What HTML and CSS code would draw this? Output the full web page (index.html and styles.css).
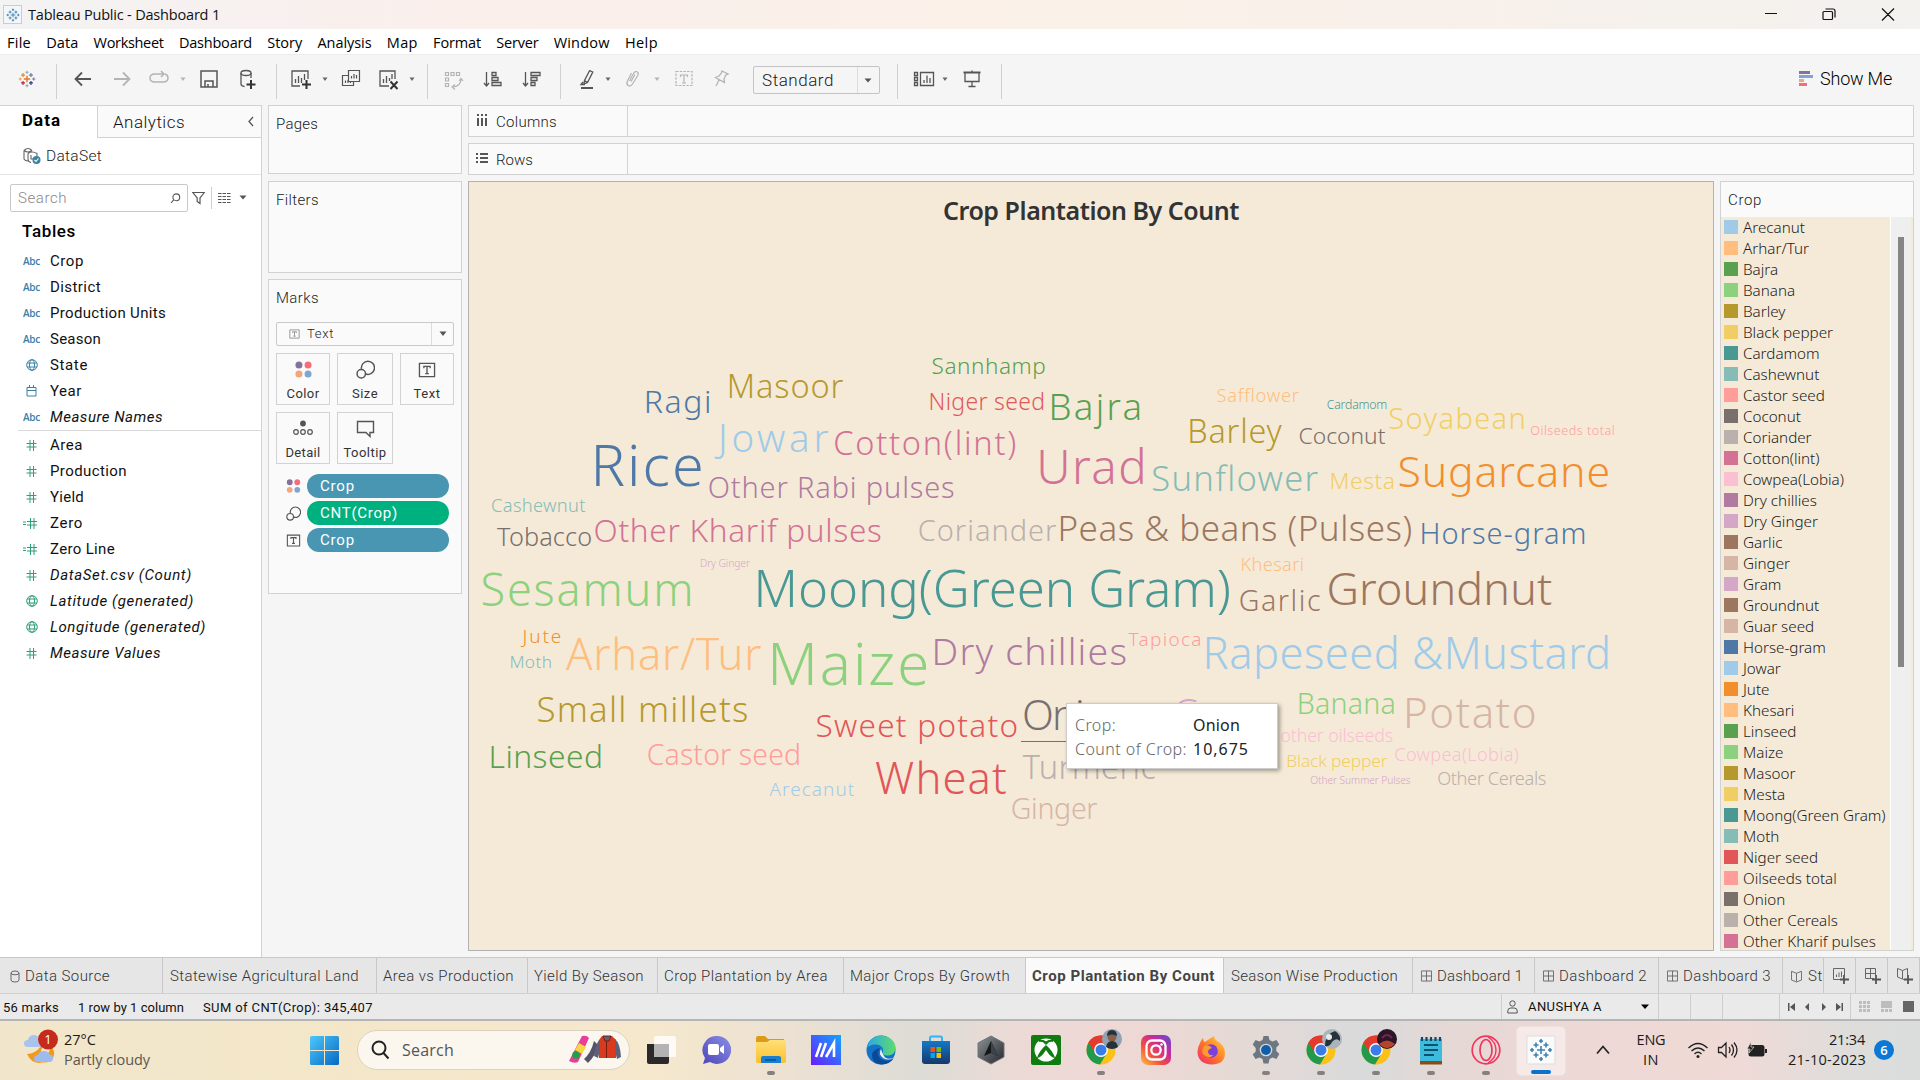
FILE: index.html
```html
<!DOCTYPE html>
<html lang="en">
<head>
<meta charset="utf-8">
<title>Tableau Public - Dashboard 1</title>
<link rel="stylesheet" href="styles.css">
</head>
<body>
<svg class="defs" aria-hidden="true">
  <defs>
    <linearGradient id="gWin" x1="0" y1="0" x2="1" y2="1"><stop offset="0" stop-color="#4cc8fb"/><stop offset="1" stop-color="#0669c4"/></linearGradient>
    <linearGradient id="gM" x1="0" y1="1" x2="1" y2="0"><stop offset="0" stop-color="#6a1cff"/><stop offset="1" stop-color="#12a5ff"/></linearGradient>
    <linearGradient id="gChat" x1="1" y1="0" x2="0" y2="1"><stop offset="0" stop-color="#8a8fe8"/><stop offset="1" stop-color="#4f46b8"/></linearGradient>
    <linearGradient id="gFold" x1="0" y1="0" x2="0" y2="1"><stop offset="0" stop-color="#ffe07a"/><stop offset="1" stop-color="#fbbf2b"/></linearGradient>
    <linearGradient id="gEdge" x1="0" y1="0" x2="1" y2="0"><stop offset="0" stop-color="#2aa7e8"/><stop offset="1" stop-color="#5fdc6a"/></linearGradient>
    <linearGradient id="gStore" x1="0" y1="0" x2="0" y2="1"><stop offset="0" stop-color="#1478c8"/><stop offset="1" stop-color="#16386a"/></linearGradient>
    <linearGradient id="gInsta" x1="0" y1="1" x2="1" y2="0"><stop offset="0" stop-color="#fdc447"/><stop offset=".35" stop-color="#f4503c"/><stop offset=".65" stop-color="#c92a9a"/><stop offset="1" stop-color="#5a4fd8"/></linearGradient>
    <linearGradient id="gFox" x1="1" y1="0" x2="0" y2="1"><stop offset="0" stop-color="#ffdc3c"/><stop offset=".5" stop-color="#ff7a2a"/><stop offset="1" stop-color="#f0246a"/></linearGradient>
    <linearGradient id="gHex" x1="0" y1="0" x2="1" y2="1"><stop offset="0" stop-color="#8d9499"/><stop offset="1" stop-color="#23262a"/></linearGradient>
    <symbol id="tlogo" viewBox="0 0 24 24">
      <g fill="none" stroke-width="1.5">
        <path d="M12 8v8M8 12h8" stroke="#e8762c" stroke-width="1.9"/>
        <path d="M7 4.500v5M4.500 7h5" stroke="#e8862c"/><path d="M17 14.500v5M14.500 17h5" stroke="#1f447e"/>
        <path d="M17 4.500v5M14.500 7h5" stroke="#59879b"/><path d="M7 14.500v5M4.500 17h5" stroke="#c72037"/>
        <path d="M12 1.500v4M10 3.500h4" stroke="#7099a6" stroke-width="1"/><path d="M12 18.500v4M10 20.500h4" stroke="#7099a6" stroke-width="1"/>
        <path d="M3.500 10v4M1.500 12h4" stroke="#eb912c" stroke-width="1"/><path d="M20.500 10v4M18.500 12h4" stroke="#5b6591" stroke-width="1"/>
      </g>
    </symbol>
    <symbol id="tlogo-blue" viewBox="0 0 24 24">
      <path fill="none" stroke="#3f83ae" stroke-width="1.600" d="M12 8v8M8 12h8M7 4.500v5M4.500 7h5M17 14.500v5M14.500 17h5M17 4.500v5M14.500 7h5M7 14.500v5M4.500 17h5M12 1v4M10 3h4M12 19v4M10 21h4M3 10v4M1 12h4M21 10v4M19 12h4"/>
    </symbol>
    <symbol id="caret" viewBox="0 0 10 24"><path d="M2.500 10.500h5L5 14z" fill="currentColor"/></symbol>
    <symbol id="ticon" viewBox="0 0 20 18"><path fill="none" stroke="currentColor" stroke-width="1.500" d="M1.500 1.500h17v15h-17zM6.500 7V5h7v2M10 5v8M8 13h4"/></symbol>
    <symbol id="dots" viewBox="0 0 16 16"><circle cx="3.700" cy="3.700" r="3.300" fill="#86719a"/><circle cx="12.300" cy="3.700" r="3.300" fill="#f46d7f"/><circle cx="3.700" cy="12.300" r="3.300" fill="#f1a67c"/><circle cx="12.300" cy="12.300" r="3.300" fill="#7fa6cf"/></symbol>
    <symbol id="size" viewBox="0 0 18 18"><g fill="none" stroke="#555" stroke-width="1.400"><path d="M5.200 8.500A6.200 6.200 0 1 1 9.300 13.300"/><circle cx="5" cy="13" r="4"/></g></symbol>
    <symbol id="grid" viewBox="0 0 12 12"><path fill="none" stroke="#666" d="M.5.5h11v11H.5zM.5 6h11M6 .5v11"/></symbol>
    <symbol id="book" viewBox="0 0 12 13"><path fill="none" stroke="#666" d="M6 3 .5.800v9.500L6 12.500l5.500-2.200V.800L6 3zM6 3v9"/></symbol>
    <symbol id="globe" viewBox="0 0 12 12"><g fill="none" stroke="currentColor"><circle cx="6" cy="6" r="5.300"/><ellipse cx="6" cy="6" rx="2.500" ry="5.300"/><path d="M1.200 4h9.600M1.200 8h9.600"/></g></symbol>
    <symbol id="chrome" viewBox="0 0 30 30"><circle cx="15" cy="15" r="14.500" fill="#fbc116"/><path d="M15 15 2.400 7.800A14.500 14.500 0 0 1 27.600 7.800z" fill="#e33b2e"/><path d="M15 15 2.400 7.800A14.500 14.500 0 0 0 14 29.500l6.600-11z" fill="#229a4c"/><path d="M15 8h12.700A14.500 14.500 0 0 0 2.400 7.800L9 18z" fill="#e33b2e"/><circle cx="15" cy="15" r="6.900" fill="#fff"/><circle cx="15" cy="15" r="5.500" fill="#3a7de8"/></symbol>
  </defs>
</svg>

<div class="titlebar">
  <div class="app-badge"><svg width="14" height="14"><use href="#tlogo-blue"/></svg></div>
  <span class="win-title" data-w="191">Tableau Public - Dashboard 1</span>
  <svg class="win-btns" width="140" height="29" fill="none" stroke="#111" stroke-width="1.200">
    <path d="M5 13.500h12M64 11.500h7.500q1 0 1 1V18.500q0 1-1 1H64q-1 0-1-1v-6q0-1 1-1zM65.500 9h7.500q2 0 2 2v6.500M122 8.500l12 12M134 8.500l-12 12"/>
  </svg>
</div>
<nav class="menubar">
  <span data-w="23">File</span><span data-w="31">Data</span><span data-w="69">Worksheet</span><span data-w="72">Dashboard</span><span data-w="34">Story</span><span data-w="53">Analysis</span><span data-w="30">Map</span><span data-w="47">Format</span><span data-w="41">Server</span><span data-w="55">Window</span><span data-w="32">Help</span>
</nav>

<div class="toolbar">
  <svg class="ic m15"><use href="#tlogo" x="2.500" y="2" width="19" height="20"/></svg>
  <i class="sep m17"></i>
  <svg class="ic m14" stroke-width="1.800"><path d="M20 12H5M11 5.500 4.500 12l6.500 6.500"/></svg>
  <svg class="ic off m15" stroke-width="1.800"><path d="M4 12h15M13 5.500l6.500 6.500-6.500 6.500"/></svg>
  <svg class="ic off m13" stroke-width="1.500"><path d="M12 7H8q-5 0-5 4t5 4h8q5 0 5-4 0-3-3-4M10 7h6M14 4l3 3-3 3"/></svg>
  <svg class="caret off m7"><use href="#caret"/></svg>
  <svg class="ic m9" stroke-width="1.500"><path d="M4 4h16v16H4zM8 20v-6h8v6"/><path d="M11 17v3"/></svg>
  <svg class="ic m15" stroke-width="1.300"><ellipse cx="10" cy="6" rx="5" ry="2.500"/><path d="M5 6v11q0 2 3.500 2.500M15 6v5"/><path class="bold" d="M15 13v9M10.500 17.500h9"/></svg>
  <i class="sep m16"></i>
  <svg class="ic m12" stroke-width="1.300"><path d="M11 19H3V4h16v8M6.500 16v-4M9.500 16V9M12.500 16v-5M15.500 13V7"/><path class="bold" d="M17.500 13v9M13 17.500h9"/></svg>
  <svg class="caret m7"><use href="#caret"/></svg>
  <svg class="ic m9" stroke-width="1.200"><path d="M9.500 3.500h11v11h-11zM9 8.500H3.500v10h11v-4M12.500 11.500V9M15 11.500V7M17.500 11.500V8M6.500 16v-2.500M9 16v-3M11.500 16v-1"/></svg>
  <svg class="ic m14" stroke-width="1.300"><path d="M12 19H3V4h15v8M6.500 16v-4M9.500 16V9M12.500 14v-3M15 12V7"/><path class="bold" d="m13.500 14.500 7 7.500M20.500 14.500l-7 7.500"/></svg>
  <svg class="caret m6"><use href="#caret"/></svg>
  <i class="sep m10"></i>
  <svg class="ic off m13" stroke-width="1.200"><path d="M4.500 5.500h3v3h-3zM10 5.500h3v3h-3zM15.500 5.500h3v3h-3zM4.500 11h3v3h-3zM4.500 16.500h3v3h-3zM20 12q0 7-8 8M18 14l2-2.500 2 2.500M14 17.500l-3 2.500 3 2.500"/></svg>
  <svg class="ic m16" stroke-width="1.300"><path d="M5.500 5v14M3 16l2.500 3L8 16M11 5.500h4v3h-4zM11 10.500h6v3h-6zM11 15.500h9v3h-9z"/></svg>
  <svg class="ic m15" stroke-width="1.300"><path d="M5.500 5v14M3 16l2.500 3L8 16M11 5.500h9v3h-9zM11 10.500h6v3h-6zM11 15.500h4v3h-4z"/></svg>
  <i class="sep m16"></i>
  <svg class="ic m14" stroke-width="1.300"><path d="M14.500 3.700 17.800 5 12.500 15.500 9 17l.5-3.500zM9.500 13.500l3 2M8 15l-2 2.500h4"/><path d="M6 21h12" stroke-width="2"/></svg>
  <svg class="caret m4"><use href="#caret"/></svg>
  <svg class="ic off m8" stroke-width="1.200"><path d="M8.500 14l4-7.500q2-3 4-1.500 1.500 1.500 0 4L11.500 17q-2 3-4.500 1.500Q5 17 6.500 14l4-8M10 14.500 14 7.500"/></svg>
  <svg class="caret off m7"><use href="#caret"/></svg>
  <svg class="ic off m10" stroke-width="1.200"><rect x="4" y="4.500" width="16" height="14" stroke-dasharray="2.500 1.200"/><path d="M8.500 10V8h7v2M12 8v8M10 16h4"/></svg>
  <svg class="ic off m13" stroke-width="1.300"><path d="m13 4 6 3-2 .800-2 4 .5 3.700-9-5 3.500-1.500 2.500-3zM10 13l-3 6"/></svg>
  <div class="select m20"><span data-w="71">Standard</span><i></i><svg width="10" height="24"><path d="M1.500 10.500h7L5 14.500z" fill="#555"/></svg></div>
  <i class="sep m17"></i>
  <svg class="ic m14" stroke-width="1.300"><path d="M8.500 5.500h13v13h-13zM12 16v-3M15 16V8.500M18 16v-5M2.500 5.500h3v3h-3zM2.500 10.500h3v3h-3zM2.500 15.500h3v3h-3z"/></svg>
  <svg class="caret m4"><use href="#caret"/></svg>
  <svg class="ic m10" stroke-width="1.300"><path d="M3.500 5.500h17" stroke-width="2"/><path d="M5 6v8.500h14V6M12 14.500V19M8.500 19.500h7M12 3.500v2"/></svg>
  <i class="sep m17"></i>
  <div class="showme"><svg width="14" height="16"><path fill="#86719a" d="M0 0h11v3H0z"/><path fill="#7fa6cf" d="M0 4h14v3H0z"/><path fill="#f1a67c" d="M0 8h5v3H0z"/><path fill="#f46d7f" d="M0 12h8v3H0z"/></svg><span data-w="71">Show Me</span></div>
</div>

<main class="workspace">
  <aside class="datapane">
    <div class="pane-tabs"><div class="pt on"><span data-w="38">Data</span></div><div class="pt"><span data-w="71">Analytics</span><svg width="8" height="12" fill="none" stroke="#555" stroke-width="1.300"><path d="M6 1 2 5.500l4 4.500"/></svg></div></div>
    <div class="dataset"><svg width="18" height="18" fill="none" stroke="#666" stroke-width="1.100"><path d="M1 3.500q4-4 8 0M1 3.500V12q1 2 4 2M1 3.500q4 3 8 0M5 6.500q4-3 9 0v3M5 6.500V12q0 3 3 3.500M8 8v4h2"/><circle cx="13.500" cy="13" r="4" fill="#3a81a6" stroke="none"/><path d="m11.500 13 1.500 1.500 2.500-3" stroke="#fff"/></svg><span data-w="55">DataSet</span></div>
    <div class="searchrow">
      <div class="search"><span data-w="48">Search</span><svg width="11" height="11" fill="none" stroke="#555" stroke-width="1.100"><circle cx="6.300" cy="4.300" r="3.400"/><path d="M3.800 6.700 1 10"/></svg></div>
      <svg class="funnel" width="13" height="14" fill="none" stroke="#555" stroke-width="1.200"><path d="M.8 1.500h11.500L8 7v5.500L5.200 10.500V7z"/></svg>
      <i></i>
      <svg width="13" height="12" fill="none" stroke="#555" stroke-width="1.200"><path d="M0 1.500h13M0 4.500h13M0 7.500h13M0 10.500h13" stroke-dasharray="3.500 1"/></svg>
      <svg width="8" height="8"><path d="M.5 1.500h7L4 5.500z" fill="#555"/></svg>
    </div>
    <h3><span data-w="53">Tables</span></h3>
    <ul class="fields" id="fields"></ul>
  </aside>

  <section class="cards">
    <div class="card pages"><span data-w="41">Pages</span></div>
    <div class="card filters"><span data-w="42">Filters</span></div>
    <div class="card marks">
      <span data-w="42">Marks</span>
      <div class="marktype"><svg width="11" height="10" color="#888"><use href="#ticon"/></svg><span data-w="26">Text</span><i></i><svg width="8" height="6"><path d="M.5.500h7L4 5z" fill="#555"/></svg></div>
      <div class="markbtns">
        <div><svg width="17" height="17"><use href="#dots"/></svg><span data-w="32">Color</span></div>
        <div><svg width="19" height="19"><use href="#size"/></svg><span data-w="25">Size</span></div>
        <div><svg width="18" height="16" color="#555"><use href="#ticon"/></svg><span data-w="26">Text</span></div>
        <div><svg width="20" height="17" fill="none" stroke="#555" stroke-width="1.200"><circle cx="10" cy="3.500" r="2.900" fill="#555" stroke="none"/><circle cx="3" cy="12" r="2.300"/><circle cx="10" cy="12" r="2.300"/><circle cx="17" cy="12" r="2.300"/></svg><span data-w="34">Detail</span></div>
        <div><svg width="19" height="18" fill="none" stroke="#555" stroke-width="1.400"><path d="M1.500 1.500h16v11H14v4l-4-4H1.500z"/></svg><span data-w="42">Tooltip</span></div>
      </div>
      <div class="pillrow"><svg width="14" height="14"><use href="#dots"/></svg><b><span data-w="34">Crop</span></b></div>
      <div class="pillrow"><svg width="15" height="15"><use href="#size"/></svg><b class="green"><span data-w="77">CNT(Crop)</span></b></div>
      <div class="pillrow"><svg width="14" height="13" color="#555"><use href="#ticon"/></svg><b><span data-w="34">Crop</span></b></div>
    </div>
  </section>

  <section class="view">
    <div class="shelf"><div class="lab"><svg width="12" height="12" stroke="#555" stroke-width="2"><path d="M2 0v2M6 0v2M10 0v2M2 4v8M6 4v8M10 4v8"/></svg><span data-w="60">Columns</span></div></div>
    <div class="shelf"><div class="lab"><svg width="12" height="12" stroke="#555" stroke-width="1.800"><path d="M0 2h2M0 6h2M0 10h2M4 2h8M4 6h8M4 10h8"/></svg><span data-w="36">Rows</span></div></div>
    <div class="stage">
      <div class="viz">
        <h1><span data-w="295">Crop Plantation By Count</span></h1>
        <svg class="cloud" id="cloud" viewBox="469 182 1244 768" width="1244" height="768"></svg>
        <div class="tip"><span class="k" data-w="40">Crop:</span><span class="v" data-w="46">Onion</span><span class="k" data-w="111">Count of Crop:</span><span class="v" data-w="55">10,675</span></div>
      </div>
      <div class="legend">
        <header><span data-w="33">Crop</span></header>
        <div class="lbody"><ul id="legend"></ul><div class="track"><i></i></div></div>
      </div>
    </div>
  </section>
</main>

<div class="sheets">
  <div class="tab t1"><svg width="10" height="13" fill="none" stroke="#666"><path d="M1 3v7q0 2 4 2t4-2V3q0-2-4-2T1 3q0 1.800 4 1.800T9 3"/></svg><span data-w="84">Data Source</span></div>
  <div class="tab t2"><span data-w="188">Statewise Agricultural Land</span></div>
  <div class="tab t3"><span data-w="130">Area vs Production</span></div>
  <div class="tab t4"><span data-w="109">Yield By Season</span></div>
  <div class="tab t5"><span data-w="163">Crop Plantation by Area</span></div>
  <div class="tab t6"><span data-w="159">Major Crops By Growth</span></div>
  <div class="tab t7 on"><span data-w="182">Crop Plantation By Count</span></div>
  <div class="tab t8"><span data-w="166">Season Wise Production</span></div>
  <div class="tab t9"><svg width="11" height="12"><use href="#grid"/></svg><span data-w="85">Dashboard 1</span></div>
  <div class="tab t10"><svg width="11" height="12"><use href="#grid"/></svg><span data-w="87">Dashboard 2</span></div>
  <div class="tab t10"><svg width="11" height="12"><use href="#grid"/></svg><span data-w="87">Dashboard 3</span></div>
  <div class="tab t11"><svg width="11" height="13"><use href="#book"/></svg><span data-w="14">St</span></div>
  <div class="tab t12"><svg width="17" height="17" fill="none" stroke="#666"><path d="M10 12.500H1.500v-11h11V9M4.500 10V7.500M7 10V5.500M9.500 10V4.500"/><path d="M12 8v9M8 12.500h9" stroke-width="1.800" stroke="#555"/></svg></div>
  <div class="tab t12"><svg width="17" height="17" fill="none" stroke="#666"><path d="M10 11.500H1.500v-10h10V9M1.500 6.500h10M6.500 1.500v10"/><path d="M12 8v9M8 12.500h9" stroke-width="1.800" stroke="#555"/></svg></div>
  <div class="tab t12"><svg width="17" height="17" fill="none" stroke="#666"><path d="M8 12.500 6.500 12l-5-2V1.500l5 2 5-2V8M6.500 3.500V12"/><path d="M12 8v9M8 12.500h9" stroke-width="1.800" stroke="#555"/></svg></div>
</div>

<div class="status">
  <div class="stext"><span data-w="55">56 marks</span><span data-w="105">1 row by 1 column</span><span data-w="169">SUM of CNT(Crop): 345,407</span></div>
  <div class="cell user"><svg width="11" height="14" fill="none" stroke="#555"><circle cx="5.500" cy="3.500" r="2.700"/><path d="M.8 13v-2q0-3 3-3h3.400q3 0 3 3v2z"/></svg><span data-w="73">ANUSHYA A</span><svg width="8" height="6"><path d="M0 .500h8L4 5z" fill="#000"/></svg></div>
  <div class="cell c32"></div><div class="cell c32"></div><div class="cell c57"></div>
  <div class="cell nav"><svg width="60" height="10" fill="#555"><path d="M2 1h1.500v8H2zM9 1v8L4 5zM23 1v8l-4-4zM36 1v8l4-4zM50 1v8l5-4zM55.500 1H57v8h-1.500z"/></svg></div>
  <div class="cell modes"><svg width="60" height="12"><path fill="#bdbdbd" d="M0 0h3v3H0zM4 0h3v3H4zM8 0h3v3H8zM0 4h3v3H0zM4 4h3v3H4zM8 4h3v3H8zM0 8h3v3H0zM4 8h3v3H4zM8 8h3v3H8zM22 0h11v7H22zM22 8h3v3h-3zM26 8h3v3h-3zM30 8h3v3h-3z"/><path fill="#666" d="M44 0h11v11H44z"/></svg></div>
</div>

<footer class="taskbar">
  <div class="weather">
    <svg width="40" height="38"><path d="M33 13q-2 13-14 15 10 6 16-2 3-6-2-13z" transform="translate(-6 3)" fill="#ef9a1d"/><path d="M3 25q6 13 19 7 3-2 4-6-3 3-8-1-4-4 7-12-4 0-8 4-6 8-14 8z" fill="#f29a1f"/><path d="M4 18q-4 0-4-3.500T4 11q1-5 6-5 4 0 5 4 4 1 4 4t-4 4z" fill="#a8c4ee"/><path d="M14 33q-4 0-4-3.500t4-3.500q1-4 6-4 4 0 5 3 4 1 4 4.500t-4 3.500z" fill="#9dbbee"/><circle cx="24" cy="10.500" r="10" fill="#c42b1c"/><text x="24" y="15" text-anchor="middle" font-size="13" fill="#fff">1</text></svg>
    <div><span data-w="31">27°C</span><br><span class="dim" data-w="85">Partly cloudy</span></div>
  </div>
  <svg class="start" width="30" height="30"><path fill="url(#gWin)" d="M1.500 0H14v14H0V1.500Q0 0 1.500 0zM15 0h12.500Q29 0 29 1.500V14H15zM0 15h14v14H1.500Q0 29 0 27.500zM15 15h14v12.500q0 1.500-1.500 1.500H15z"/></svg>
  <div class="tsearch">
    <svg width="19" height="20" fill="none" stroke="#222" stroke-width="2"><circle cx="8" cy="8" r="6.500"/><path d="m12.500 13 5 5.500"/></svg><span data-w="51">Search</span>
    <svg class="deco" width="54" height="30"><path d="M14 1q5-1 7 2L10 27q-4 2-9-1z" fill="#e83e9a"/><path d="m11 8 7 4-4 7-7-4z" fill="#f6d743"/><circle cx="8" cy="20" r="3.800" fill="#23a045"/><path d="M26 6q-3 12-10 18l4 4q8-8 10-18z" fill="#54536c"/><path d="M34 1h10l4 4v18H31V5z" fill="#d93a1e"/><path d="M35 1h8l-2 5h-4zM38.500 6v17" fill="#5d6078" stroke="#7a1d10"/><path d="M47 4q5 4 6 18l-4 2-2-8z" fill="#5d6078"/><path d="M31 5q-4 6-5 16l4 2 2-8z" fill="#5d6078"/></svg>
  </div>
  <div class="apps">
    <div><svg width="30" height="30"><path d="M1 9h22v18q0 2-2 2H3q-2 0-2-2z" fill="#2a2a2a"/><path d="M8 3q0-2 2-2h18q2 0 2 2v19H8z" fill="#fff" opacity=".8"/><path d="M8 9h15v13H8z" fill="#b3b3b3"/></svg></div>
    <div><svg width="30" height="30"><path d="M15 1a14 14 0 1 1-6 26l-7 2 2-6A14 14 0 0 1 15 1z" fill="url(#gChat)"/><rect x="7" y="9" width="11" height="11" rx="2" fill="#fff"/><path d="m19 13 4-3v9l-4-3z" fill="#fff"/></svg></div>
    <div class="run"><svg width="30" height="30"><path d="M0 3q0-2 2-2h7l3 3h16v8H0z" fill="#dc9a16"/><path d="M0 7h11l3-2h14q2 0 2 2v19q0 2-2 2H2q-2 0-2-2z" fill="url(#gFold)"/><path d="M5 28v-5q0-2 2-2h16q2 0 2 2v5z" fill="#1b7fd1"/><path d="M9 25h11" stroke="#0b4f8c" stroke-width="1.500"/></svg></div>
    <div><svg width="30" height="30"><path d="M0 0h30v30H0z" fill="url(#gM)"/><path d="m5 22 5-14M10 22l5-14M15 22l8-14v14" stroke="#fff" stroke-width="2.600" fill="none"/></svg></div>
    <div><svg width="30" height="30"><circle cx="15" cy="15" r="14.500" fill="#1273c9"/><path d="M1 13C3 4 9 .500 15 .500c8 0 14.500 6 14.500 12 0 5-3 8-7.500 8-4 0-6-1-5-4 1-4-3-7-7-7-5 0-8 2-9 3.500z" fill="url(#gEdge)"/><path d="M14 13q-5 8 3 12 6 2 11-2-5 7-13 6.500-9-1-9-9 0-6 8-7.500z" fill="#0c4a97"/><path d="M15 14q-3 5 2 9 5 3 11 0-8 2-10-2-2-3-3-7z" fill="#eee"/></svg></div>
    <div><svg width="30" height="30"><path d="M9 7V3q0-1.500 1.500-1.500h9Q21 1.500 21 3v4" fill="none" stroke="#37b1f1" stroke-width="2"/><path d="M1 6h28v20q0 3-3 3H4q-3 0-3-3z" fill="url(#gStore)"/><path d="M9.500 12H14v5H9.500z" fill="#f25022"/><path d="M15.500 12H20v5h-4.500z" fill="#7fba00"/><path d="M9.500 18H14v5H9.500z" fill="#00a4ef"/><path d="M15.500 18H20v5h-4.500z" fill="#ffb900"/></svg></div>
    <div><svg width="30" height="30"><path d="m15 1 13 7v14l-13 7-13-7V8z" fill="url(#gHex)"/><path d="M15 6 8 21l7-3 7 3z" fill="#15171a"/><path d="M15 6v12l7 3z" fill="#3c4247"/><path d="m15 1 13 7v14l-13 7-13-7V8z" fill="none" stroke="#70767b"/></svg></div>
    <div><svg width="30" height="30"><rect width="30" height="30" rx="2" fill="#107c10"/><circle cx="15" cy="15" r="11.500" fill="#fff"/><path d="M15 9q-5-5-8-3 4-2 8 .500Q19 4 23 6q-3-2-8 3zM15 10q7 6 9 13-4 0-9-8-5 8-9 8 2-7 9-13z" fill="#107c10"/><path d="M8 6q4-1 7 2.500Q18 5 22 6" stroke="#107c10" stroke-width="2" fill="none"/></svg></div>
    <div class="run"><svg width="42" height="42"><use href="#chrome" x="6" y="6" width="30" height="30"/><circle cx="32" cy="10" r="10" fill="#8fa3b3"/><circle cx="32" cy="8" r="4.500" fill="#8a5f4a"/><path d="M27 7q0-6 5-6t5 6q-5-3-10 0zM26 18q1-6 6-6t6 6q-6 4-12 0z" fill="#26313a"/></svg></div>
    <div><svg width="30" height="30"><rect width="30" height="30" rx="7" fill="url(#gInsta)"/><g fill="none" stroke="#fff" stroke-width="2.300"><rect x="5.500" y="5.500" width="19" height="19" rx="5.500"/><circle cx="15" cy="15" r="4.700"/></g><circle cx="20.500" cy="9.500" r="1.300" fill="#fff"/></svg></div>
    <div><svg width="30" height="30"><path d="M4 8q1-3 3-5 0 3 2 4 4-3 9-6 0 3 3 5 8 4 8 12 0 11-13 11.500Q2 29 1.500 17q0-5 2.500-9z" fill="url(#gFox)"/><circle cx="15" cy="16" r="6.800" fill="#7a40d8"/><path d="M8 11q5-2 8 2-4 1-4 4 1 4 6 3-6 5-11-1-2-4 1-8z" fill="#ff9a2e"/></svg></div>
    <div class="run"><svg width="30" height="30"><path d="M12.500 1h5l1 4 3 1.500 4-1.500 2.800 4.500-3 3v3.500l3 3L25.500 24l-4-1.500-3 1.500-1 4.500h-5l-1-4.500-3-1.500-4 1.500L1.700 19.500l3-3V13l-3-3.500L4.500 5l4 1.500 3-1.500z" fill="#6d7782"/><circle cx="15" cy="15" r="6.300" fill="#d6dade"/><circle cx="15" cy="15" r="5" fill="#0f5ea8"/></svg></div>
    <div class="run"><svg width="42" height="42"><use href="#chrome" x="6" y="6" width="30" height="30"/><circle cx="32" cy="10" r="10" fill="#a9b4bb"/><path d="M25 17q0-12 10-15 6 4 5 10-4-4-8 1-2 5-7 4z" fill="#27313a"/><circle cx="29" cy="8" r="3" fill="#e6eaec"/></svg></div>
    <div class="run"><svg width="42" height="42"><use href="#chrome" x="6" y="6" width="30" height="30"/><circle cx="32" cy="10" r="10" fill="#2d1426"/><path d="M24 15q8-7 16 0-8 8-16 0z" fill="#b8432c"/><path d="M27 9q5-6 10 0" stroke="#6c2a4e" stroke-width="2" fill="none"/></svg></div>
    <div class="run"><svg width="30" height="30"><path d="M4 4h22v23H4z" fill="#3cbcdc"/><path d="M4 26h22v3.500H4z" fill="#8a4d12"/><path d="M6 2v4M10.500 2v4M15 2v4M19.500 2v4M24 2v4" stroke="#0f4a66" stroke-width="2.200"/><path d="M8 10h14M8 15h14M8 20h10" stroke="#0c5270" stroke-width="2"/></svg></div>
    <div class="run"><svg width="30" height="30" fill="none" stroke="#f2345f"><circle cx="15" cy="15" r="13.800" stroke-width="1.700"/><ellipse cx="15" cy="15" rx="6" ry="10.500" stroke-width="1.700"/><path d="M17 2q8 5 8 13t-8 13" stroke-width="1.400"/></svg></div>
    <div class="run active"><svg width="30" height="30"><path d="M1 1h28v28H1z" fill="#fafafa" stroke="#ddd"/><use href="#tlogo-blue" x="3" y="3" width="24" height="24"/></svg></div>
  </div>
  <div class="tray">
    <svg class="up" width="16" height="10" fill="none" stroke="#222" stroke-width="1.700"><path d="m2 8.500 6-7 6 7"/></svg>
    <div class="lang"><span data-w="28">ENG</span><br><span data-w="15">IN</span></div>
    <svg class="wifi" width="22" height="18" fill="none" stroke="#222" stroke-width="1.400"><path d="M1.500 7q9.500-9 19 0M4.500 10q6.500-6 13 0M7.500 13q3.500-3.300 7 0"/><circle cx="11" cy="15.500" r="1.500" fill="#222" stroke="none"/></svg>
    <svg class="spk" width="22" height="18" fill="none" stroke="#222" stroke-width="1.300"><path d="M1.500 6.500h3L9 2v14l-4.500-4.500h-3zM12 6q2 3 0 6M14.500 3.500q4 5.500 0 11M17 1.500q6 7.500 0 15"/></svg>
    <svg class="bat" width="22" height="18"><path d="M4.500 4.700H16q1.800 0 1.800 1.800v6.500q0 1.800-1.800 1.800H5q-1.800 0-1.800-1.800V9z" fill="#222" stroke="#222" stroke-width="1.400"/><path d="M19 8h2v4h-2z" fill="#222"/><path d="M5 1 1 8h3l-1 4 5-6H5z" fill="#222" stroke="#e5dad6" stroke-width=".7"/></svg>
    <div class="clock"><span data-w="35">21:34</span><br><span data-w="77">21-10-2023</span></div>
    <b class="cnt">6</b>
  </div>
</footer>
<script src="app.js"></script>
</body>
</html>
```
FILE: styles.css
```css
* { box-sizing: border-box; }
body { margin: 0; width: 1920px; height: 1080px; overflow: hidden; display: flex; flex-direction: column; background: #f5f5f5; font-family: Roboto, "Open Sans", sans-serif; font-size: 15px; color: #333; }
.defs { position: absolute; width: 0; height: 0; }
svg { flex: none; display: block; }
span { white-space: nowrap; }
ul { list-style: none; margin: 0; padding: 0; }

.titlebar { flex: none; height: 29px; display: flex; align-items: center; background: linear-gradient(90deg, #f3f3f3, #faefec 22%, #faf1e8 55%, #f9f0ea 70%, #f3f2ef); padding-left: 3px; color: #111; }
.app-badge { width: 19px; height: 19px; border: 1px solid #c9cdd0; background: #f3f7f9; display: flex; align-items: center; justify-content: center; }
.win-title { margin-left: 6px; font: 14.500px "Open Sans", sans-serif; }
.win-btns { margin-left: auto; margin-right: 20px; }
.menubar { flex: none; height: 25px; background: #fff; display: flex; align-items: center; padding: 1px 0 0 7px; gap: 15.300px; font: 14.500px "Open Sans", sans-serif; color: #000; }

.toolbar { flex: none; height: 51px; display: flex; align-items: center; border-top: 1px solid #ececec; padding-bottom: 3px; }
.ic { width: 24px; height: 24px; fill: none; stroke: #555; color: #555; }
.ic .bold { stroke: #333; stroke-width: 2; }
.caret { width: 10px; height: 24px; color: #666; }
.ic.off { stroke: #b4b4b4; }
.caret.off { color: #b4b4b4; }
.sep { width: 1px; height: 35px; background: #cfcfcf; margin-top: 5px; }
.m4 { margin-left: 4px; } .m6 { margin-left: 6px; } .m7 { margin-left: 7px; } .m8 { margin-left: 8px; } .m9 { margin-left: 9px; }
.m10 { margin-left: 10px; } .m12 { margin-left: 12px; } .m13 { margin-left: 13px; } .m14 { margin-left: 14px; } .m15 { margin-left: 15px; }
.m16 { margin-left: 16px; } .m17 { margin-left: 17px; } .m20 { margin-left: 20px; }
.select { width: 127px; height: 28px; border: 1px solid #c4c4c4; border-radius: 2px; display: flex; align-items: center; padding-left: 8px; font-size: 17px; font-weight: 300; color: #222; margin-top: 2px; }
.select i { width: 1px; height: 26px; background: #dcdcdc; margin-left: 23px; margin-right: 5px; }
.showme { margin-left: auto; display: flex; align-items: center; gap: 7px; margin-right: 28px; font-size: 18px; font-weight: 300; color: #000; }

.workspace { height: 852px; flex: none; display: flex; }
.datapane { width: 262px; background: #fff; border-top: 1px solid #d2d2d2; border-right: 1px solid #d2d2d2; }
.pane-tabs { display: flex; height: 32px; }
.pt { display: flex; align-items: center; font-size: 17px; color: #111; flex: 1; background: #fafafa; border-left: 1px solid #d2d2d2; border-bottom: 1px solid #d2d2d2; padding: 0 6px 0 15px; justify-content: space-between; font-weight: 300; }
.pt.on { flex: none; width: 97px; background: #fff; border: 0; font-weight: 700; color: #000; padding: 0 0 4px 22px; }
.dataset { height: 37px; display: flex; align-items: center; gap: 5px; padding-left: 23px; border-bottom: 1px solid #e4e4e4; font-weight: 300; font-size: 15.500px; color: #222; }
.searchrow { display: flex; align-items: center; padding: 9px 0 0 10px; }
.search { width: 178px; height: 28px; border: 1px solid #c9c9c9; border-radius: 2px; padding: 0 6px 0 7px; display: flex; align-items: center; justify-content: space-between; color: #888; font-weight: 300; }
.funnel { margin-left: 4px; }
.searchrow i { width: 1px; height: 22px; background: #cfcfcf; margin: 0 6px 0 6px; }
.searchrow svg:last-child { margin-left: 8px; }
.datapane h3 { margin: 0; padding: 8px 0 0 22px; font-size: 17px; line-height: 22px; font-weight: 500; color: #000; }
.fields { padding-top: 6px; color: #111; }
.fields li { height: 26px; display: flex; align-items: center; font-weight: 400; }
.fields li.it { font-style: italic; }
.fields .ty { width: 27px; margin-left: 23px; flex: none; display: flex; align-items: center; color: #3a81a6; font: 600 10px "Open Sans", sans-serif; letter-spacing: -.3px; }
.fields .ty svg { margin-left: 3px; }
.fields .gr { color: #2f9e7b; }
.fields li.line { height: 28px; padding-top: 2px; position: relative; }
.fields li.line::before { content: ""; position: absolute; left: 18px; right: 0; top: 0; height: 1px; background: #dadada; }

.cards { width: 194px; margin-left: 6px; display: flex; flex-direction: column; gap: 7px; font-weight: 300; color: #222; }
.card { background: #fafafa; border: 1px solid #d2d2d2; padding: 8px 7px 0; line-height: 20px; }
.pages { height: 69px; } .filters { height: 92px; } .marks { height: 315px; margin-top: -1px; }
.marktype { margin-top: 14px; width: 178px; height: 24px; border: 1px solid #c9c9c9; border-radius: 2px; display: flex; align-items: center; padding-left: 12px; font-size: 13px; gap: 7px; }
.marktype i { width: 1px; height: 22px; background: #dcdcdc; margin-left: 90px; }
.markbtns { display: grid; grid-template-columns: 54px 56px 54px; gap: 7px; margin-top: 7px; font-size: 13px; font-weight: 400; color: #333; }
.markbtns div { height: 52px; border: 1px solid #d2d2d2; display: grid; grid-template-rows: 31px 17px; justify-items: center; align-items: center; line-height: 17px; }
.pillrow { display: flex; height: 24px; margin-top: 3px; align-items: center; padding-left: 10px; }
.markbtns + .pillrow { margin-top: 10px; }
.pillrow svg { width: 15px; margin-right: 6px; }
.pillrow b { width: 142px; height: 24px; border-radius: 12px; background: #4996b2; color: #fff; font-weight: 400; font-size: 15px; line-height: 25px; padding-left: 13px; }
.pillrow b.green { background: #00b180; }

.view { margin-left: 6px; width: 1446px; display: flex; flex-direction: column; gap: 6px; color: #222; }
.shelf { height: 32px; background: #fafafa; border: 1px solid #d2d2d2; flex: none; }
.lab { width: 159px; height: 30px; border-right: 1px solid #d2d2d2; display: flex; align-items: center; padding-left: 7px; gap: 8px; font-weight: 300; padding-top: 1px; }
.lab svg { margin-top: -3px; }
.stage { display: flex; gap: 6px; height: 770px; }
.viz { width: 1246px; border: 1px solid #b2b2b2; background: #f5ead8; position: relative; }
.viz h1 { position: absolute; left: 0; right: 0; top: 11px; margin: 0; text-align: center; font: 600 25px/34px "Noto Sans", "Open Sans", sans-serif; color: #333; }
.cloud { font-family: "Noto Sans", "Open Sans", sans-serif; font-weight: 300; }
.tip { position: absolute; left: 597px; top: 521px; width: 212px; height: 66px; background: #fff; border: 1px solid #ccc; box-shadow: 2px 2px 4px rgba(0,0,0,.35); padding: 9px 0 0 8px; display: grid; grid-template-columns: 118px 1fr; grid-auto-rows: 24px; line-height: 24px; font-family: "Noto Sans", "Open Sans", sans-serif; font-size: 16px; }
.tip .k { color: #666; font-weight: 300; } .tip .v { color: #222; font-weight: 400; }
.legend { width: 194px; border: 1px solid #d2d2d2; background: #f5ead8; display: flex; flex-direction: column; }
.legend header { height: 35px; flex: none; background: #fafafa; padding: 1px 0 0 7px; line-height: 34px; font-weight: 300; }
.lbody { flex: 1; min-height: 0; display: flex; }
.lbody ul { width: 169px; overflow: hidden; font: 300 15.200px "Noto Sans", "Open Sans", sans-serif; color: #1c1c1c; }
.lbody li { height: 21px; display: flex; align-items: center; gap: 5px; padding: 0 0 2px 3px; }
.lbody li i { width: 14px; height: 14px; }
.track { width: 21px; background: #efefef; border-left: 1px solid #fff; padding: 20px 0 0 7px; }
.track i { display: block; width: 6px; height: 430px; background: #868686; }

.sheets { flex: none; height: 37px; background: #e6e6e6; border-top: 1px solid #c8c8c8; border-bottom: 1px solid #d0d0d0; display: flex; font-weight: 300; color: #333; }
.tab { border-right: 1px solid #c8c8c8; display: flex; align-items: center; padding-left: 7px; padding-top: 1px; flex: none; overflow: hidden; }
.t1 { width: 163px; padding-left: 10px; gap: 5px; } .t2 { width: 214px; } .t3 { width: 151px; padding-left: 6px; } .t4 { width: 130px; padding-left: 6px; } .t5 { width: 186px; padding-left: 6px; }
.t6 { width: 182px; padding-left: 6px; } .t7 { width: 198px; padding-left: 6px; } .t8 { width: 189px; }
.t9 { width: 122px; padding-left: 8px; gap: 5px; } .t10 { width: 124px; padding-left: 8px; gap: 5px; } .t11 { width: 41px; padding-left: 8px; gap: 6px; }
.t12 { width: 32px; padding-left: 8px; padding-top: 0; }
.tab.on { background: #fafafa; font-weight: 700; color: #444; padding-top: 0; }
.status { flex: none; height: 27px; background: #eaeaea; border-bottom: 2px solid #b5b5b5; display: flex; color: #111; font-size: 13px; }
.stext { width: 1501px; display: flex; gap: 19px; align-items: center; padding: 1px 0 0 3px; }
.cell { border-left: 1px solid #cdcdcd; display: flex; align-items: center; }
.user { width: 157px; padding-left: 5px; gap: 10px; } .user svg:last-child { margin-left: 29px; }
.c32 { width: 32px; } .c57 { width: 57px; } .nav { width: 71px; padding-left: 6px; } .modes { padding-left: 8px; }

.taskbar { flex: 1; display: flex; align-items: center; position: relative; font: 14.500px/20px "Open Sans", sans-serif; color: #1b1b1b; background: linear-gradient(90deg, #f1e6cb 0, #f4e7c9 18%, #f5e8cd 34%, #ece1d2 41%, #dddcd6 48%, #ecdad5 53%, #efd8d5 58%, #e6d9d4 64%, #d9dadb 71%, #e6d8d5 76%, #eed8d5 83%, #eedad6 91%, #dfdddb 96%, #dadddd 100%); padding-bottom: 1px; }
.weather { display: flex; padding-left: 24px; width: 310px; align-items: center; }
.weather svg { margin-top: -4px; }
.weather .dim { color: #5b574f; }
.start { margin-top: 2px; }
.tsearch { width: 273px; height: 40px; margin-left: 17px; border: 1px solid #ddd2bd; border-radius: 20px; background: #fbf6ee; display: flex; align-items: center; padding-left: 13px; gap: 12px; font-size: 16px; color: #555; }
.deco { margin-left: auto; margin-right: 7px; }
.apps { display: flex; margin-left: 3px; }
.apps > div { width: 55px; height: 48px; display: flex; align-items: center; justify-content: center; position: relative; }
.apps .run::after { content: ""; position: absolute; bottom: -1px; left: 24px; width: 8px; height: 4px; border-radius: 2px; background: #85807e; }
.apps .active::before { content: ""; position: absolute; left: 3px; top: 0; width: 48px; height: 48px; border-radius: 5px; background: #f6eae8; border: 1px solid #eee0de; }
.apps .active svg { position: relative; }
.apps .active::after { width: 20px; left: 18px; background: #0a73d0; bottom: 0; }
.tray { display: flex; align-items: center; flex: 1; padding-left: 27px; }
.lang { width: 48px; margin-left: 16px; text-align: center; }
.wifi { margin-left: 12px; } .spk { margin-left: 8px; } .bat { margin-left: 7px; }
.clock { margin-left: 20px; text-align: right; width: 77px; }
.cnt { margin-left: 9px; width: 20px; height: 20px; border-radius: 10px; background: #0a78d4; color: #fff; text-align: center; font-size: 13px; font-weight: 600; }
```
FILE: app.js
```javascript
const C = {
  blue: '#4e79a7', sky: '#a0cbe8', orange: '#f28e2b', peach: '#ffbe7d', green: '#59a14f', lime: '#8cd17d',
  olive: '#b6992d', gold: '#f1ce63', teal: '#499894', aqua: '#86bcb6', red: '#e15759', salmon: '#ff9d9a',
  slate: '#79706e', ash: '#bab0ac', rose: '#d37295', pink: '#fabfd2', plum: '#b07aa1', lilac: '#d4a6c8',
  brown: '#9d7660', tan: '#d7b5a6'
};

// word, colour, left, right, baseline, font size
const words = [
  ['Sannhamp', 'green', 932, 1045.5, 373.7, 22.5], ['Masoor', 'olive', 729, 844, 398, 32.5], ['Ragi', 'blue', 646, 709.6, 413, 32],
  ['Niger seed', 'red', 930, 1043.5, 410, 23], ['Bajra', 'green', 1050.5, 1140, 420, 36.5], ['Jowar', 'sky', 713, 829, 451.7, 38.5],
  ['Cotton(lint)', 'rose', 834.5, 1015.7, 455, 32.5], ['Rice', 'blue', 594, 702, 486, 57.5], ['Urad', 'rose', 1039, 1144, 483.7, 47.5],
  ['Other Rabi pulses', 'plum', 708, 954.5, 497.7, 29], ['Cashewnut', 'aqua', 491.6, 585.5, 512, 18.3], ['Tobacco', 'slate', 496.5, 591.6, 545.7, 25.3],
  ['Other Kharif pulses', 'rose', 593.7, 881.4, 541.7, 31.5], ['Coriander', 'ash', 918, 1056.5, 540.7, 29],
  ['Peas & beans (Pulses)', 'brown', 1059.6, 1412, 540.7, 35], ['Dry Ginger', 'lilac', 700.6, 750, 567.3, 10.3],
  ['Sesamum', 'lime', 481.4, 691, 605.8, 45], ['Moong(Green Gram)', 'teal', 757.3, 1230.6, 607, 51],
  ['Safflower', 'peach', 1216, 1299, 402, 18.3], ['Cardamom', 'teal', 1326.5, 1386.5, 409, 12.3], ['Soyabean', 'gold', 1388.6, 1524, 428.7, 29],
  ['Barley', 'olive', 1189.4, 1283, 442.7, 32.3], ['Coconut', 'slate', 1299, 1386, 443.7, 22.8], ['Oilseeds total', 'salmon', 1530, 1614, 435, 12.6],
  ['Sunflower', 'aqua', 1151.4, 1319, 490.7, 34.5], ['Mesta', 'gold', 1331, 1394, 489, 22.8], ['Sugarcane', 'orange', 1398.4, 1609, 487, 42.8],
  ['Horse-gram', 'blue', 1420.8, 1585, 544.3, 29], ['Khesari', 'peach', 1241, 1303, 571, 18.3], ['Garlic', 'brown', 1239, 1320.4, 610.7, 28.5],
  ['Groundnut', 'brown', 1327.3, 1552.7, 605, 44.8], ['Jute', 'orange', 520, 561, 642.7, 19], ['Moth', 'aqua', 510, 551, 668, 17.3],
  ['Arhar/Tur', 'peach', 565, 762, 669.7, 43.5], ['Maize', 'lime', 770.8, 927, 685, 58], ['Dry chillies', 'plum', 933.7, 1126, 664.7, 37.500],
  ['Small millets', 'olive', 536.5, 747.5, 722, 34.8], ['Sweet potato', 'red', 815.7, 1017, 736.7, 31.5], ['Onion', 'slate', 1023, 1128, 730, 41.5],
  ['Linseed', 'green', 490.8, 601.4, 767.7, 31.8], ['Castor seed', 'salmon', 647, 799.4, 764.7, 28.5], ['Wheat', 'red', 875, 1006.7, 793.7, 43.5],
  ['Turmeric', 'ash', 1022, 1156, 779, 32.5], ['Arecanut', 'sky', 769, 854, 795.7, 19], ['Ginger', 'tan', 1011, 1097.8, 818.7, 28.5],
  ['Tapioca', 'salmon', 1128, 1200.6, 645.7, 19], ['Rapeseed &Mustard', 'sky', 1205.5, 1608.7, 668.7, 43.5], ['Gram', 'lilac', 1174, 1270, 725, 37],
  ['Banana', 'lime', 1298, 1394, 713.7, 28.5], ['Potato', 'tan', 1406, 1535.4, 727.7, 42], ['other oilseeds', 'pink', 1281, 1393, 742, 17.8],
  ['Black pepper', 'gold', 1286.8, 1388, 766.7, 17.3], ['Cowpea(Lobia)', 'pink', 1394.8, 1519, 761, 18.2],
  ['Other Summer Pulses', 'lilac', 1310, 1411, 784, 10.2], ['Other Cereals', 'ash', 1437.7, 1546, 785, 18.2]
];

const legend = [
  ['Arecanut', 'sky'], ['Arhar/Tur', 'peach'], ['Bajra', 'green'], ['Banana', 'lime'], ['Barley', 'olive'], ['Black pepper', 'gold'],
  ['Cardamom', 'teal'], ['Cashewnut', 'aqua'], ['Castor seed', 'salmon'], ['Coconut', 'slate'], ['Coriander', 'ash'], ['Cotton(lint)', 'rose'],
  ['Cowpea(Lobia)', 'pink'], ['Dry chillies', 'plum'], ['Dry Ginger', 'lilac'], ['Garlic', 'brown'], ['Ginger', 'tan'], ['Gram', 'lilac'],
  ['Groundnut', 'brown'], ['Guar seed', 'tan'], ['Horse-gram', 'blue'], ['Jowar', 'sky'], ['Jute', 'orange'], ['Khesari', 'peach'],
  ['Linseed', 'green'], ['Maize', 'lime'], ['Masoor', 'olive'], ['Mesta', 'gold'], ['Moong(Green Gram)', 'teal'], ['Moth', 'aqua'],
  ['Niger seed', 'red'], ['Oilseeds total', 'salmon'], ['Onion', 'slate'], ['Other Cereals', 'ash'], ['Other Kharif pulses', 'rose']
];

// name, icon, width, extra row classes
const fields = [
  ['Crop', 'abc', 33], ['District', 'abc', 50], ['Production Units', 'abc', 115], ['Season', 'abc', 50], ['State', 'geo', 37],
  ['Year', 'date', 31], ['Measure Names', 'abc', 112, 'it'], ['Area', 'num', 32, 'line'], ['Production', 'num', 76], ['Yield', 'num', 33],
  ['Zero', 'calc', 32], ['Zero Line', 'calc', 64], ['DataSet.csv (Count)', 'num', 141, 'it'], ['Latitude (generated)', 'ggeo', 143, 'it'],
  ['Longitude (generated)', 'ggeo', 155, 'it'], ['Measure Values', 'num', 110, 'it']
];
const hash = 'M0 4.500h10M0 8h10M3.500 1v11M7 1v11';
const icons = {
  abc: '<div class="ty">Abc</div>',
  geo: '<div class="ty"><svg width="12" height="12"><use href="#globe"/></svg></div>',
  ggeo: '<div class="ty gr"><svg width="12" height="12"><use href="#globe"/></svg></div>',
  date: '<div class="ty"><svg width="11" height="12" fill="none" stroke="currentColor"><path d="M1 2.500h9v8.500H1zM1 5.500h9M3.500 0v2.500M7.500 0v2.500"/></svg></div>',
  num: `<div class="ty gr"><svg width="11" height="13" fill="none" stroke="currentColor"><path transform="translate(.5 0)" d="${hash}"/></svg></div>`,
  calc: `<div class="ty gr"><svg style="margin-left:0" width="15" height="13" fill="none" stroke="currentColor"><path d="M0 5h3M0 7.500h3"/><path transform="translate(4 0)" d="${hash}"/></svg></div>`
};

document.getElementById('fields').innerHTML = fields.map(([n, t, w, c]) =>
  `<li class="${c || ''}">${icons[t]}<span data-w="${w}">${n}</span></li>`).join('');
document.getElementById('legend').innerHTML = legend.map(([n, c]) =>
  `<li><i style="background:${C[c]}"></i><span>${n}</span></li>`).join('');

document.querySelectorAll('[data-w]').forEach(el => {
  const r = document.createRange();
  r.selectNodeContents(el);
  const natural = r.getBoundingClientRect().width;
  el.style.letterSpacing = ((+el.dataset.w + 1 - natural) / el.textContent.length).toFixed(3) + 'px';
});

// Place each word by its ink edges.
const cloud = document.getElementById('cloud');
const ctx = document.createElement('canvas').getContext('2d');
cloud.innerHTML = words.map(([t, c, l, r, y, s]) => {
  ctx.font = `300 ${s}px "Noto Sans"`;
  const m = ctx.measureText(t);
  const left = l + s * 0.025, right = r - s * 0.015;
  const ink = m.actualBoundingBoxRight + m.actualBoundingBoxLeft;
  const ls = (right - left - ink) / (t.length - 1);
  const x = left + m.actualBoundingBoxLeft;
  return `<text x="${x.toFixed(1)}" y="${y}" font-size="${s}" fill="${C[c]}" letter-spacing="${ls.toFixed(2)}">${t.replace('&', '&amp;')}</text>`;
}).join('') + '<path d="M1021 741.500h112" stroke="#79706e"/>';
```
